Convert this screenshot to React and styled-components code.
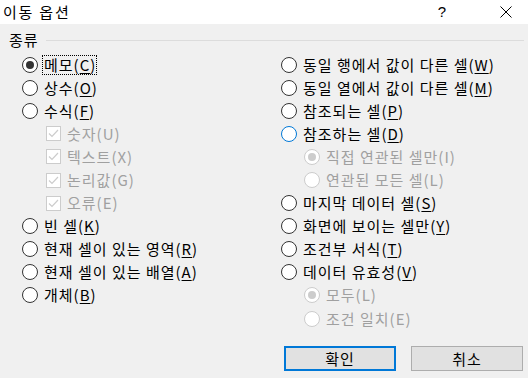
import React from "react";
import styled, { createGlobalStyle, css } from "styled-components";

const Global = createGlobalStyle`
  html, body { margin: 0; padding: 0; background: #f0f0f0; }
  body { font-family: "Noto Sans CJK KR", "Noto Sans", sans-serif; color: #000; }
`;

const Window = styled.div`
  width: 528px;
  height: 378px;
  background: #f0f0f0;
  display: flex;
  flex-direction: column;
  overflow: hidden;
`;

const TitleBar = styled.div`
  height: 24px;
  background: #ffffff;
  display: flex;
  align-items: center;
  font-size: 15px;
  line-height: 24px;
`;

const Title = styled.div`
  padding-left: 3px;
  flex: 1;
  letter-spacing: 1.8px;
`;

const Help = styled.div`
  width: 20px;
  text-align: center;
  margin-right: 48px;
  font-family: "Liberation Sans", sans-serif;
  font-size: 15px;
`;

const Close = styled.div`
  width: 12px;
  height: 12px;
  margin-right: 16px;
  display: flex;
`;

const Body = styled.div`
  flex: 1;
  display: flex;
  flex-direction: column;
  font-size: 15px;
  letter-spacing: 1px;
`;

const GroupHeader = styled.div`
  display: flex;
  align-items: center;
  height: 16px;
  margin-top: 8px;
  padding-left: 9px;
  padding-right: 4px;
  gap: 7px;
  line-height: 16px;
`;

const GroupLine = styled.div`
  flex: 1;
  height: 1px;
  background: #dcdcdc;
`;

const Columns = styled.div`
  display: grid;
  grid-template-columns: 259px 1fr;
  padding-left: 22px;
  margin-top: 5px;
`;

const Column = styled.div`
  display: flex;
  flex-direction: column;
`;

const Row = styled.div`
  height: 23.1px;
  display: flex;
  align-items: center;
  gap: 5px;
  padding-left: ${(p) => (p.$indent ? 23 : 0)}px;
  color: ${(p) => (p.$disabled ? "#a0a0a0" : "#000")};
  white-space: nowrap;
`;

const RadioCircle = styled.span`
  box-sizing: border-box;
  width: 16px;
  height: 16px;
  border-radius: 50%;
  background: #fff;
  border: 1px solid #333;
  display: inline-flex;
  align-items: center;
  justify-content: center;
  flex: none;
  ${(p) =>
    p.$hover &&
    css`
      border-color: #0078d7;
    `}
  ${(p) =>
    p.$disabled &&
    css`
      border-color: #cccccc;
    `}
  &::after {
    content: "";
    display: ${(p) => (p.$checked ? "block" : "none")};
    width: 8px;
    height: 8px;
    border-radius: 50%;
    background: ${(p) => (p.$disabled ? "#cccccc" : "#333")};
  }
`;

const CheckBox = styled.span`
  box-sizing: border-box;
  width: 15px;
  height: 15px;
  margin-left: 1px;
  border: 1px solid #cccccc;
  background: #fff;
  display: inline-flex;
  align-items: center;
  justify-content: center;
  flex: none;
`;

const Label = styled.span`
  line-height: 16px;
  padding: 1px 0 1px 1px;
  margin-left: -1px;
  border: 1px solid transparent;
  ${(p) =>
    p.$focus &&
    css`
      border: 1px dotted #000;
    `}
`;

const Key = styled.span`
  text-decoration: underline;
  text-underline-offset: 2px;
`;

const Footer = styled.div`
  display: flex;
  justify-content: flex-end;
  gap: 15px;
  padding-right: 5px;
  margin-top: auto;
  margin-bottom: 7px;
`;

const Button = styled.div`
  box-sizing: border-box;
  width: 112px;
  height: 25px;
  background: #e1e1e1;
  border: ${(p) => (p.$primary ? "2px solid #0078d7" : "1px solid #adadad")};
  display: flex;
  align-items: center;
  justify-content: center;
  font-size: 15px;
  letter-spacing: 1px;
`;

function Text({ text, k, focus }) {
  return (
    <Label $focus={focus}>
      {text}
      {k ? (
        <>
          (<Key>{k}</Key>)
        </>
      ) : null}
    </Label>
  );
}

function Radio({ text, k, checked, disabled, hover, indent, focus }) {
  return (
    <Row $indent={indent} $disabled={disabled}>
      <RadioCircle $checked={checked} $disabled={disabled} $hover={hover} />
      <Text text={text} k={k} focus={focus} />
    </Row>
  );
}

function Check({ text }) {
  return (
    <Row $indent $disabled>
      <CheckBox>
        <svg width="11" height="9" viewBox="0 0 11 9">
          <path d="M1 4.5 L4 7.5 L10 1" fill="none" stroke="#cccccc" strokeWidth="1.2" />
        </svg>
      </CheckBox>
      <Text text={text} />
    </Row>
  );
}

export default function App() {
  return (
    <Window>
      <Global />
      <TitleBar>
        <Title>이동 옵션</Title>
        <Help>?</Help>
        <Close>
          <svg width="12" height="12" viewBox="0 0 12 12">
            <path d="M0.5 0.5 L11.5 11.5 M11.5 0.5 L0.5 11.5" stroke="#000" strokeWidth="1" />
          </svg>
        </Close>
      </TitleBar>
      <Body>
        <GroupHeader>
          <span>종류</span>
          <GroupLine />
        </GroupHeader>
        <Columns>
          <Column>
            <Radio text="메모" k="C" checked focus />
            <Radio text="상수" k="O" />
            <Radio text="수식" k="F" />
            <Check text="숫자(U)" />
            <Check text="텍스트(X)" />
            <Check text="논리값(G)" />
            <Check text="오류(E)" />
            <Radio text="빈 셀" k="K" />
            <Radio text="현재 셀이 있는 영역" k="R" />
            <Radio text="현재 셀이 있는 배열" k="A" />
            <Radio text="개체" k="B" />
          </Column>
          <Column>
            <Radio text="동일 행에서 값이 다른 셀" k="W" />
            <Radio text="동일 열에서 값이 다른 셀" k="M" />
            <Radio text="참조되는 셀" k="P" />
            <Radio text="참조하는 셀" k="D" hover />
            <Radio text="직접 연관된 셀만(I)" indent disabled checked />
            <Radio text="연관된 모든 셀(L)" indent disabled />
            <Radio text="마지막 데이터 셀" k="S" />
            <Radio text="화면에 보이는 셀만" k="Y" />
            <Radio text="조건부 서식" k="T" />
            <Radio text="데이터 유효성" k="V" />
            <Radio text="모두(L)" indent disabled checked />
            <Radio text="조건 일치(E)" indent disabled />
          </Column>
        </Columns>
        <Footer>
          <Button $primary>확인</Button>
          <Button>취소</Button>
        </Footer>
      </Body>
    </Window>
  );
}
